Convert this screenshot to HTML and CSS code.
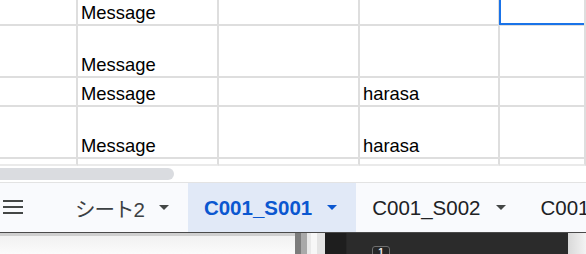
FILE: index.html
```html
<!DOCTYPE html>
<html lang="ja">
<head>
    <meta charset="UTF-8">
    <title>シート</title>
    <link rel="stylesheet" href="styles.css">
</head>
<body>
    <div class="sheet">
        <div class="cell"></div>
        <div class="cell">Message</div>
        <div class="cell"></div>
        <div class="cell"></div>
        <div class="cell selected"><div class="selection"></div></div>

        <div class="cell"></div>
        <div class="cell">Message</div>
        <div class="cell"></div>
        <div class="cell"></div>
        <div class="cell"></div>

        <div class="cell"></div>
        <div class="cell">Message</div>
        <div class="cell"></div>
        <div class="cell">harasa</div>
        <div class="cell"></div>

        <div class="cell"></div>
        <div class="cell">Message</div>
        <div class="cell"></div>
        <div class="cell">harasa</div>
        <div class="cell"></div>

        <div class="cell thin"></div>
        <div class="cell thin"></div>
        <div class="cell thin"></div>
        <div class="cell thin"></div>
        <div class="cell thin"></div>
    </div>

    <div class="hscroll"><div class="thumb"></div></div>

    <div class="tabbar">
        <div class="menu">
            <svg width="20" height="14" viewBox="0 0 20 14">
                <rect x="0" y="0" width="20" height="2" fill="#444746"/>
                <rect x="0" y="6" width="20" height="2" fill="#444746"/>
                <rect x="0" y="12" width="20" height="2" fill="#444746"/>
            </svg>
        </div>
        <div class="tab"><span class="tab-name ja">シート2</span><span class="caret"></span></div>
        <div class="tab active"><span class="tab-name">C001_S001</span><span class="caret"></span></div>
        <div class="tab"><span class="tab-name">C001_S002</span><span class="caret"></span></div>
        <div class="tab"><span class="tab-name">C001_S003</span><span class="caret"></span></div>
    </div>

    <div class="below">
        <div class="pane-light"></div>
        <div class="pane-gutter"></div>
        <div class="pane-gap"></div>
        <div class="pane-dark">
            <div class="dark-side"></div>
            <div class="dark-main"><span class="chip">1</span></div>
        </div>
        <div class="pane-edge"></div>
    </div>
</body>
</html>
```

FILE: styles.css
```css
:root {
    --grid: #dedede;
    --blue: #1a73e8;
    --tab-bg: #f9fafd;
    --tab-active: #e1e9f7;
    --tab-active-text: #0b57d0;
    --text: #202124;
}

* {
    box-sizing: border-box;
}

html, body {
    margin: 0;
    height: 254px;
    overflow: hidden;
    background: #fff;
}

body {
    font-family: 'Liberation Sans', Arial, sans-serif;
}

/* シートのグリッド */
.sheet {
    display: grid;
    grid-template-columns: 78px 141px 141px 140px 1fr;
    grid-template-rows: 26px 52px 29px 52px 7px;
}

.cell {
    display: flex;
    align-items: flex-end;
    padding: 0 3px 1px;
    border-right: 2px solid var(--grid);
    border-bottom: 2px solid var(--grid);
    font-size: 18.4px;
    line-height: 20px;
    color: #000;
    white-space: nowrap;
    overflow: hidden;
}

.cell.thin {
    border-bottom-color: #eaeaea;
}

.cell.selected {
    position: relative;
    overflow: visible;
}

.selection {
    position: absolute;
    top: 0;
    right: 0;
    left: -1px;
    bottom: -1px;
    border-left: 2px solid var(--blue);
    border-bottom: 2px solid var(--blue);
}

/* 横スクロールバー */
.hscroll {
    height: 16px;
    padding-top: 2px;
}

.thumb {
    width: 174px;
    height: 12px;
    background: #dadce0;
    border-radius: 0 6px 6px 0;
}

/* シートタブ */
.tabbar {
    display: flex;
    height: 51px;
    background: var(--tab-bg);
    border-top: 1px solid #e3e3e3;
    border-bottom: 1px solid #4a4a4a;
    font-size: 20.5px;
    color: var(--text);
    white-space: nowrap;
}

.menu {
    width: 59px;
    flex: none;
    display: flex;
    align-items: center;
    padding: 0 0 2px 3px;
}

.menu svg {
    display: block;
}

.tab {
    flex: none;
    display: flex;
    align-items: center;
    padding: 0 19px 0 16px;
    gap: 15px;
}

.tab-name {
    font-family: 'Liberation Sans', 'Noto Sans CJK JP', sans-serif;
}

.tab-name.ja {
    letter-spacing: -1px;
    color: #3c4043;
}

.caret {
    width: 0;
    height: 0;
    border-left: 5px solid transparent;
    border-right: 5px solid transparent;
    border-top: 5px solid #444746;
}

.tab.active {
    background: var(--tab-active);
    color: var(--tab-active-text);
    font-weight: bold;
}

.tab.active .caret {
    border-top-color: var(--tab-active-text);
}

/* 下のウィンドウ */
.below {
    display: flex;
    height: 21px;
}

.pane-light {
    width: 295px;
    border-top: 3px solid #cfcfcf;
    background: linear-gradient(#f1f1f1, #fbfbfb);
}

.pane-gutter {
    width: 12px;
    background: linear-gradient(90deg, #7c7c7c 0 6px, #a9a9a9 6px);
}

.pane-gap {
    width: 18px;
    background: linear-gradient(90deg, #e9e9e9 0 4px, #f7f7f7 4px 10px, #e4e4e4 10px);
}

.pane-dark {
    width: 243px;
    display: flex;
    background: #2b2b2b;
}

.dark-side {
    width: 22px;
    background: #1e1e1e;
    border-right: 1px solid #262626;
}

.dark-main {
    flex: 1;
    padding: 13px 0 0 25px;
}

.chip {
    display: block;
    width: 18px;
    height: 14px;
    border: 1px solid #6f6f6f;
    border-radius: 3px;
    background: #262626;
    color: #e8e8e8;
    font-size: 10px;
    line-height: 12px;
    text-align: center;
    font-weight: bold;
}

.pane-edge {
    flex: 1;
    background: linear-gradient(90deg, #d9d9d9, #f3f3f3);
}
```
